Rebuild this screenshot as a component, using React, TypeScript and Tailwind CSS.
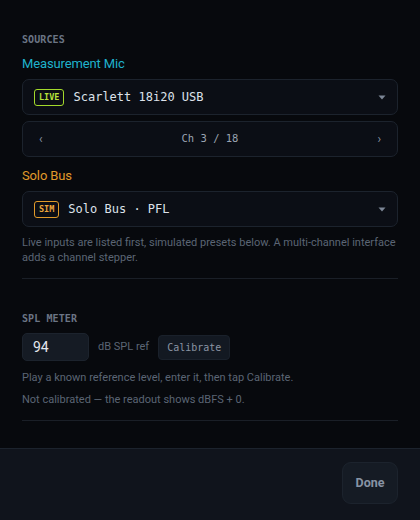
import React from "react";

const mono = { fontFamily: '"DejaVu Sans Mono", "Liberation Mono", monospace' };

const Caret = () => (
  <svg width="8" height="5" viewBox="0 0 8 5" className="shrink-0">
    <path d="M0.5 0.5 L7.5 0.5 L4 4.5 Z" fill="#7c8696" />
  </svg>
);

const Badge = ({ label, tone }: { label: string; tone: "live" | "sim" }) => (
  <span
    style={mono}
    className={
      "inline-flex items-center justify-center h-[17px] px-[4px] rounded-[3px] border text-[8.5px] font-bold leading-none " +
      (tone === "live"
        ? "border-[#a3d92b] text-[#b7e33a]"
        : "border-[#e09a2a] text-[#eba53a]")
    }
  >
    {label}
  </span>
);

const SourceSelect = ({
  badge,
  tone,
  name,
}: {
  badge: string;
  tone: "live" | "sim";
  name: string;
}) => (
  <div className="flex items-center h-[36px] pl-[11px] pr-[11px] rounded-[7px] border border-[#1c232d] bg-[#0b0e15]">
    <Badge label={badge} tone={tone} />
    <span style={mono} className="ml-[9px] text-[12px] text-[#dde2ea] flex-1">
      {name}
    </span>
    <Caret />
  </div>
);

const App = () => {
  return (
    <div
      className="w-[420px] h-[520px] bg-[#07090d] flex flex-col overflow-hidden"
      style={{ fontFamily: 'Roboto, "Noto Sans", sans-serif' }}
    >
      <div className="flex-1 px-[22px] pt-[34px]">
        <div className="border-b border-[#1a1f27] pb-[13px]">
          <div style={mono} className="text-[10px] font-bold tracking-[0.01em] text-[#6b7585] leading-[12px]">
            SOURCES
          </div>
          <div className="mt-[10px] text-[13px] tracking-[-0.01em] leading-[16px] text-[#1fb2cc]">
            Measurement Mic
          </div>
          <div className="mt-[7px]">
            <SourceSelect badge="LIVE" tone="live" name="Scarlett 18i20 USB" />
          </div>
          <div className="mt-[6px] flex items-center h-[36px] px-[16px] rounded-[7px] border border-[#1c232d] bg-[#0b0e15] text-[#8a93a2]">
            <span className="text-[12px]">‹</span>
            <span style={mono} className="flex-1 text-center text-[10.5px] text-[#9aa3b1]">
              Ch 3 / 18
            </span>
            <span className="text-[12px]">›</span>
          </div>
          <div className="mt-[11px] text-[13px] tracking-[-0.01em] leading-[16px] text-[#e09a2a]">
            Solo Bus
          </div>
          <div className="mt-[7px]">
            <SourceSelect badge="SIM" tone="sim" name="Solo Bus · PFL" />
          </div>
          <p className="mt-[8px] text-[11px] leading-[15px] text-[#5b6574]">
            Live inputs are listed first, simulated presets below. A multi-channel interface adds a channel stepper.
          </p>
        </div>

        <div className="pt-[34px] pb-[13px] border-b border-[#1a1f27]">
          <div style={mono} className="text-[10px] font-bold tracking-[0.01em] text-[#6b7585] leading-[12px]">
            SPL METER
          </div>
          <div className="mt-[8px] flex items-center">
            <div className="w-[67px] h-[28px] rounded-[5px] bg-[#151b24] border border-[#1c232d] flex items-center pl-[10px] text-[14px] text-[#e4e8ee]">
              94
            </div>
            <span className="ml-[9px] text-[11px] text-[#5b6574]">dB SPL ref</span>
            <button
              style={mono}
              className="ml-[9px] h-[25px] px-[8px] rounded-[4px] bg-[#131922] border border-[#1a212b] text-[10px] text-[#8a94a3]"
            >
              Calibrate
            </button>
          </div>
          <p className="mt-[9px] text-[11px] leading-[15px] text-[#5b6574]">
            Play a known reference level, enter it, then tap Calibrate.
          </p>
          <p className="mt-[7px] text-[11px] leading-[15px] text-[#5b6574]">
            Not calibrated — the readout shows dBFS + 0.
          </p>
        </div>
      </div>

      <div className="h-[72px] shrink-0 bg-[#10141c] border-t border-[#1c232d] flex items-start justify-end px-[22px] pt-[13px]">
        <button className="w-[56px] h-[42px] rounded-[9px] bg-[#151b24] border border-[#1c232d] text-[12.5px] font-bold text-[#8893a4]">
          Done
        </button>
      </div>
    </div>
  );
};

export default App;
